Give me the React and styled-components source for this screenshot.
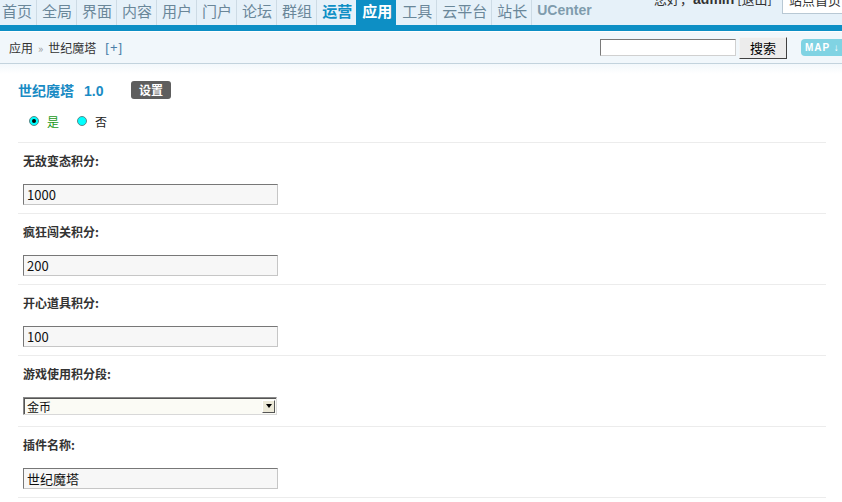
import React from 'react';
import styled, { createGlobalStyle } from 'styled-components';

const GlobalStyle = createGlobalStyle`
  html, body {
    margin: 0;
    padding: 0;
    background: #fff;
    overflow: hidden;
  }
  body {
    font-family: "Noto Sans CJK SC", "Liberation Sans", sans-serif;
    font-size: 12px;
    color: #333;
  }
`;

const Page = styled.div`
  width: 842px;
  height: 502px;
  overflow: hidden;
`;

const Header = styled.div`
  background: #e6f1f9;
  border-bottom: 6px solid #0d8fc5;
  height: 25px;
  display: flex;
  justify-content: space-between;
`;

const Nav = styled.ul`
  list-style: none;
  margin: 0 0 0 -4px;
  padding: 0;
  display: flex;
`;

const NavItem = styled.li`
  height: 25px;
  line-height: 21px;
  padding: 0 4px 0 5px;
  color: ${p => (p.active ? '#fff' : p.hot ? '#0d8fc5' : p.latin ? '#7f9cad' : '#6a8799')};
  font-weight: ${p => (p.active || p.hot || p.latin ? 'bold' : 'normal')};
  background: ${p => (p.active ? '#0d8fc5' : 'transparent')};
  border-left: 1px solid ${p => (p.first || p.active || p.afterActive ? 'transparent' : '#cddbe5')};
  font-family: ${p => (p.latin ? '"Liberation Sans", sans-serif' : '"Noto Sans CJK SC", sans-serif')};
  font-size: ${p => (p.latin ? '14px' : '15px')};
  white-space: nowrap;
`;

const UserBox = styled.div`
  display: flex;
  align-items: flex-start;
  margin-top: -12px;
  gap: 10px;
`;

const Greeting = styled.span`
  font-size: 13px;
  line-height: 20px;
  color: #333;
  margin-top: 1px;

  b {
    font-family: "Liberation Sans", sans-serif;
    font-size: 14px;
  }
`;

const SiteSelect = styled.div`
  width: 60px;
  height: 24px;
  margin-right: -8px;
  border: 1px solid #b8c8d4;
  background: #fff;
  font-size: 13px;
  line-height: 22px;
  padding-left: 6px;
  color: #333;
  white-space: nowrap;
  overflow: hidden;
`;

const Crumbs = styled.div`
  height: 31px;
  margin-top: 1px;
  background: #f1f7fb;
  border-bottom: 1px solid #c3d3dd;
  display: flex;
  align-items: center;
  justify-content: space-between;
  padding-left: 9px;
`;

const CrumbText = styled.div`
  font-size: 12px;
  color: #333;
  display: flex;
  align-items: center;
  gap: 5px;
`;

const Raquo = styled.span`
  color: #999;
  font-size: 11px;
`;

const AddLink = styled.span`
  color: #4b7fa8;
  font-family: "Liberation Sans", sans-serif;
  font-size: 13px;
  letter-spacing: 1px;
  margin-left: 4px;
`;

const SearchBox = styled.div`
  display: flex;
  align-items: center;
`;

const SearchInput = styled.div`
  width: 134px;
  height: 15px;
  border: 1px solid;
  border-color: #7a7a7a #d0d0d0 #d0d0d0 #7a7a7a;
  background: #fff;
`;

const SearchButton = styled.div`
  margin-left: 3px;
  width: 46px;
  height: 20px;
  border: 1px solid;
  border-color: #f4f4f4 #404040 #404040 #f4f4f4;
  background: #ececec;
  font-size: 13px;
  line-height: 20px;
  text-align: center;
  color: #000;
`;

const MapButton = styled.div`
  margin-left: 14px;
  width: 41px;
  height: 17px;
  border-radius: 4px 0 0 4px;
  background: #80d3e3;
  color: #fff;
  font-family: "Liberation Sans", sans-serif;
  font-weight: bold;
  font-size: 10px;
  line-height: 17px;
  padding-left: 4px;
  letter-spacing: 1px;
  box-sizing: border-box;
  white-space: nowrap;
  overflow: hidden;
`;

const Main = styled.div`
  background: linear-gradient(#f3f8fb, #ffffff 10px);
  padding: 17px 16px 0 18px;
`;

const TitleLine = styled.div`
  display: flex;
  align-items: center;
  height: 18px;
`;

const AppTitle = styled.h3`
  margin: 0;
  font-size: 14px;
  font-weight: bold;
  color: #1a8bc4;
  width: 113px;
  white-space: nowrap;

  span {
    font-family: "Liberation Sans", sans-serif;
    margin-left: 10px;
  }
`;

const Badge = styled.span`
  display: inline-block;
  width: 40px;
  height: 18px;
  border-radius: 3px;
  background: #5e5e5e;
  color: #fff;
  font-weight: bold;
  font-size: 12px;
  line-height: 18px;
  text-align: center;
`;

const RadioLine = styled.div`
  display: flex;
  align-items: center;
  height: 14px;
  margin: 15px 0 14px 11px;
`;

const Radio = styled.span`
  position: relative;
  display: inline-block;
  width: 8px;
  height: 8px;
  border-radius: 50%;
  background: #0ff;
  border: 1px solid #5a8a8a;
  margin-right: 8px;

  &::after {
    content: '';
    display: ${p => (p.checked ? 'block' : 'none')};
    position: absolute;
    left: 2px;
    top: 2px;
    width: 4px;
    height: 4px;
    border-radius: 50%;
    background: #000;
  }
`;

const RadioLabel = styled.span`
  font-size: 12px;
  color: ${p => (p.green ? '#1a9a1a' : '#222')};
  margin-right: 18px;
`;

const Row = styled.div`
  border-top: 1px solid #ececec;
  padding: 10px 5px 8px;
`;

const Label = styled.div`
  height: 16px;
  line-height: 16px;
  font-weight: bold;
  font-size: 12px;
  color: #333;
  margin-bottom: 15px;
`;

const TextInput = styled.div`
  height: 19px;
  border: 1px solid;
  border-color: #777 #c6c6c6 #c6c6c6 #777;
  background: #f7f7f7;
  font-size: 13px;
  line-height: 19px;
  padding-left: 3px;
  width: 250px;
  color: #111;
`;

const Select = styled.div`
  width: 249px;
  height: 16px;
  margin-bottom: 3px;
  border: 1px solid;
  border-color: #888 #d8d8d8 #d8d8d8 #888;
  box-shadow: inset 1px 1px 0 #555;
  background: #fbfbf5;
  display: flex;
  justify-content: space-between;
  align-items: center;
  font-size: 12px;
  padding-left: 3px;
  color: #111;
`;

const DropButton = styled.span`
  width: 13px;
  height: 13px;
  margin-right: 1px;
  background: #ece9d8;
  border: 1px solid;
  border-color: #fff #555 #555 #fff;
  display: flex;
  align-items: center;
  justify-content: center;
  box-sizing: border-box;

  &::after {
    content: '';
    border-left: 3px solid transparent;
    border-right: 3px solid transparent;
    border-top: 4px solid #000;
  }
`;

const LastLine = styled.div`
  border-top: 1px solid #ececec;
`;

const navItems = ['首页', '全局', '界面', '内容', '用户', '门户', '论坛', '群组', '运营', '应用', '工具', '云平台', '站长', 'UCenter'];

const fields = [
  { label: '无敌变态积分:', value: '1000' },
  { label: '疯狂闯关积分:', value: '200' },
  { label: '开心道具积分:', value: '100' },
  { label: '游戏使用积分段:', value: '金币', select: true },
  { label: '插件名称:', value: '世纪魔塔' }
];

export default function App() {
  return (
    <Page>
      <GlobalStyle />
      <Header>
        <Nav>
          {navItems.map((item, i) => (
            <NavItem
              key={item}
              first={i === 0}
              active={item === '应用'}
              afterActive={item === '工具'}
              hot={item === '运营'}
              latin={item === 'UCenter'}
            >
              {item}
            </NavItem>
          ))}
        </Nav>
        <UserBox>
          <Greeting>您好，<b>admin</b> [退出]</Greeting>
          <SiteSelect>站点首页</SiteSelect>
        </UserBox>
      </Header>

      <Crumbs>
        <CrumbText>
          应用 <Raquo>»</Raquo> 世纪魔塔 <AddLink>[+]</AddLink>
        </CrumbText>
        <SearchBox>
          <SearchInput />
          <SearchButton>搜索</SearchButton>
          <MapButton>MAP ↓</MapButton>
        </SearchBox>
      </Crumbs>

      <Main>
        <TitleLine>
          <AppTitle>世纪魔塔<span>1.0</span></AppTitle>
          <Badge>设置</Badge>
        </TitleLine>
        <RadioLine>
          <Radio checked />
          <RadioLabel green>是</RadioLabel>
          <Radio />
          <RadioLabel>否</RadioLabel>
        </RadioLine>
        {fields.map(f => (
          <Row key={f.label}>
            <Label>{f.label}</Label>
            {f.select ? (
              <Select>
                {f.value}
                <DropButton />
              </Select>
            ) : (
              <TextInput>{f.value}</TextInput>
            )}
          </Row>
        ))}
        <LastLine />
      </Main>
    </Page>
  );
}
